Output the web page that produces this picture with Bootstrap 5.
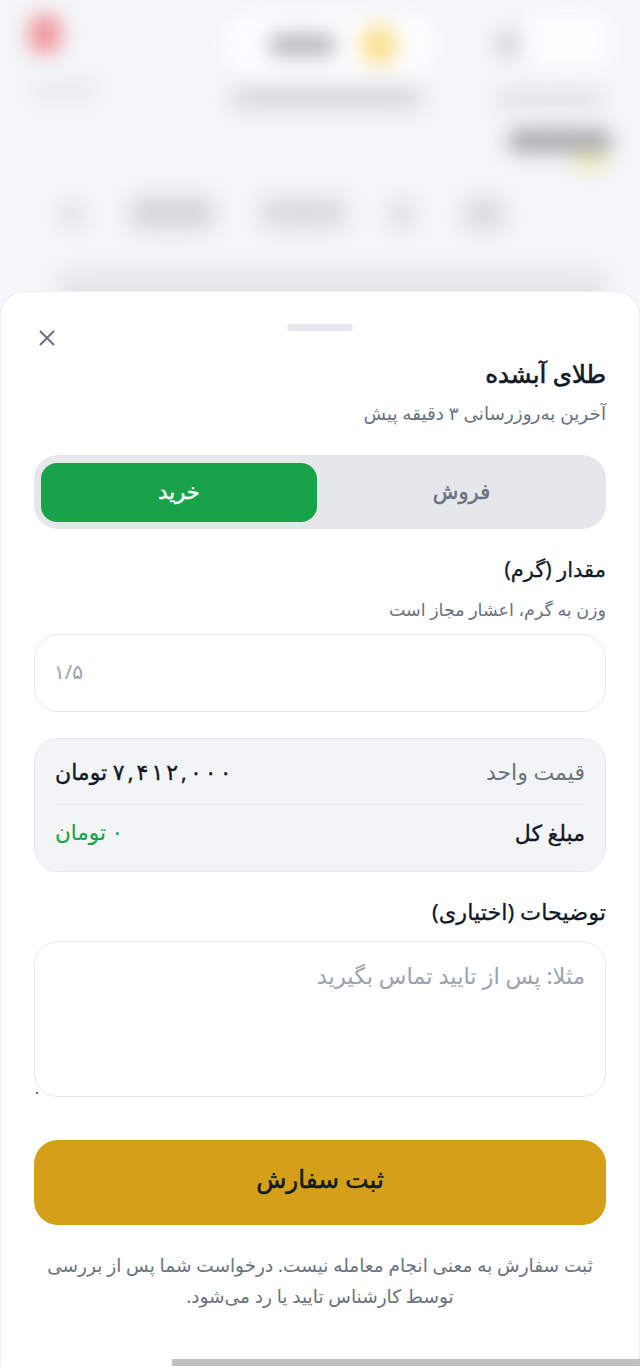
<!doctype html>
<html lang="fa" dir="rtl">
<head>
<meta charset="utf-8">
<meta name="viewport" content="width=device-width, initial-scale=1">
<link href="https://cdn.jsdelivr.net/npm/bootstrap@5.3.0/dist/css/bootstrap.min.css" rel="stylesheet">
<style>
html,body{height:100%;margin:0;overflow:hidden}
body{font-family:"Noto Sans","DejaVu Sans",sans-serif;background:#f4f6f8;color:#111827;position:relative;height:1367px}
.backdrop{position:absolute;inset:0 0 auto 0;height:310px;overflow:hidden;filter:blur(10px)}
.blob{position:absolute;border-radius:12px}
.sheet{position:absolute;left:1px;right:1px;top:292px;bottom:0;background:#fff;border-radius:24px 24px 0 0;padding:0 33px;box-shadow:0 0 0 1px #eceef1}
.handle{position:absolute;left:286px;top:32px;width:66px;height:7px;border-radius:4px;background:#e5e7eb}
.closer{position:absolute;left:37px;top:37px;width:18px;height:18px;background:none;border:0;padding:0;line-height:0}
.sheet-title{font-size:24.5px;font-weight:400;-webkit-text-stroke:.6px currentColor;margin:0;padding-top:65px;line-height:34px}
.subt{font-size:18.4px;color:#6b7280;line-height:26px;margin:9px 0 0}
.seg{margin-top:29px;height:74px;background:#e5e7eb;border-radius:24px;padding:8px 0 7px 7px}
.seg-btn{border:0;height:59px;flex:1 1 0;font-size:21px;font-weight:400;-webkit-text-stroke:.5px currentColor;background:none;color:#6b7280;padding:0 0 2px}
.seg-on{flex:0 0 276px;border-radius:16px;background:#18a34a;color:#fff}
.lbl{font-size:21px;font-weight:400;-webkit-text-stroke:.25px currentColor;line-height:30px;margin:25px 0 0}
.lbl-wide{font-size:22.4px;margin-top:25px;margin-bottom:14px}
.hint{font-size:17.5px;color:#6b7280;line-height:24px;margin:13px 0 13px}
.fld{border:1px solid #e5e7eb;border-radius:24px;padding:0 19px 3px;font-size:20px;color:#111827;box-shadow:none}
.fld::placeholder{color:#9ca3af}
.fld-num{height:78px;text-align:left}
.fld-area{height:156px;padding-top:19px;padding-right:20px;font-size:22.6px;line-height:30px;resize:none;display:block}
.pricebox{margin-top:26px;height:134px;background:#f3f4f6;border:1px solid #e5e7eb;border-radius:24px;padding:0 20px}
.price-row{font-size:22px}
.price-a{height:65px}
.price-b{height:67px;padding-bottom:11px;border-top:1px solid #e5e7eb}
.muted-c{color:#6b7280}
.green-c{color:#18a34a;font-size:21.5px;-webkit-text-stroke:.15px currentColor}
.strong-c{-webkit-text-stroke:.35px currentColor}
.digits{display:inline-flex;direction:ltr;gap:3px}
.areawrap{position:relative}
.grip{position:absolute;left:2px;bottom:3px;width:2px;height:2px;border-radius:50%;background:#374151}
.go{display:block;width:100%;margin-top:43px;height:85px;background:#d4a017;border:0;border-radius:24px;padding:0 0 7px;font-size:24.7px;font-weight:400;-webkit-text-stroke:.5px currentColor;color:#111827}
.note{font-size:18.5px;line-height:31px;color:#6b7280;text-align:center;margin:24px 0 0;white-space:nowrap}
.scrolly{position:absolute;left:172px;right:0;bottom:1px;height:7px;background:#c0c0c0}
</style>
</head>
<body>
<div class="backdrop" aria-hidden="true">
  <div class="blob" style="left:29px;top:15px;width:32px;height:38px;background:#f0929a"></div>
  <div class="blob" style="left:32px;top:82px;width:64px;height:16px;background:#e7e9ec"></div>
  <div class="blob" style="left:222px;top:14px;width:216px;height:60px;border-radius:30px;background:#fdfdff"></div>
  <div class="blob" style="left:268px;top:34px;width:68px;height:22px;background:#b4b6ba"></div>
  <div class="blob" style="left:362px;top:26px;width:34px;height:38px;background:#fbe08f"></div>
  <div class="blob" style="left:498px;top:32px;width:20px;height:24px;background:#c8cace"></div>
  <div class="blob" style="left:528px;top:12px;width:82px;height:56px;background:#fdfdff"></div>
  <div class="blob" style="left:232px;top:87px;width:190px;height:22px;background:#d6d8dc"></div>
  <div class="blob" style="left:496px;top:90px;width:106px;height:18px;background:#dfe1e4"></div>
  <div class="blob" style="left:508px;top:129px;width:104px;height:24px;background:#a8aaad"></div>
  <div class="blob" style="left:574px;top:154px;width:34px;height:13px;background:#f2e6a8"></div>
  <div class="blob" style="left:62px;top:204px;width:22px;height:22px;background:#d9dbde"></div>
  <div class="blob" style="left:130px;top:196px;width:84px;height:34px;background:#d6d8dc"></div>
  <div class="blob" style="left:260px;top:198px;width:86px;height:30px;background:#d9dbde"></div>
  <div class="blob" style="left:390px;top:200px;width:24px;height:28px;background:#dadcdf"></div>
  <div class="blob" style="left:464px;top:198px;width:40px;height:32px;background:#d9dbde"></div>
  <div class="blob" style="left:58px;top:272px;width:548px;height:34px;background:#e3e5e7"></div>
</div>
<main class="sheet">
  <span class="handle"></span>
  <button class="closer" type="button" aria-label="بستن">
    <svg width="18" height="18" viewBox="0 0 18 18" fill="none" stroke="#6b7280" stroke-width="2" stroke-linecap="round"><path d="M2.5 2.5l13 13M15.5 2.5l-13 13"/></svg>
  </button>
  <h1 class="sheet-title">طلای آبشده</h1>
  <p class="subt">آخرین به‌روزرسانی ۳ دقیقه پیش</p>
  <div class="seg d-flex">
    <button class="seg-btn" type="button">فروش</button>
    <button class="seg-btn seg-on" type="button">خرید</button>
  </div>
  <h2 class="lbl">مقدار (گرم)</h2>
  <p class="hint">وزن به گرم، اعشار مجاز است</p>
  <input class="form-control fld fld-num" dir="ltr" type="text" placeholder="۱/۵">
  <div class="pricebox">
    <div class="price-row price-a d-flex justify-content-between align-items-center">
      <span class="muted-c">قیمت واحد</span>
      <span class="strong-c"><span class="digits"><span>۷</span><span>,</span><span>۴</span><span>۱</span><span>۲</span><span>,</span><span>۰</span><span>۰</span><span>۰</span></span> تومان</span>
    </div>
    <div class="price-row price-b d-flex justify-content-between align-items-center">
      <span class="strong-c">مبلغ کل</span>
      <span class="green-c">۰ تومان</span>
    </div>
  </div>
  <h2 class="lbl lbl-wide">توضیحات (اختیاری)</h2>
  <div class="areawrap">
    <textarea class="form-control fld fld-area" placeholder="مثلا: پس از تایید تماس بگیرید"></textarea>
    <span class="grip"></span>
  </div>
  <button class="go" type="button">ثبت سفارش</button>
  <p class="note">ثبت سفارش به معنی انجام معامله نیست. درخواست شما پس از بررسی<br>توسط کارشناس تایید یا رد می‌شود.</p>
</main>
<div class="scrolly"></div>
<script src="https://cdn.jsdelivr.net/npm/bootstrap@5.3.0/dist/js/bootstrap.bundle.min.js"></script>
</body>
</html>
